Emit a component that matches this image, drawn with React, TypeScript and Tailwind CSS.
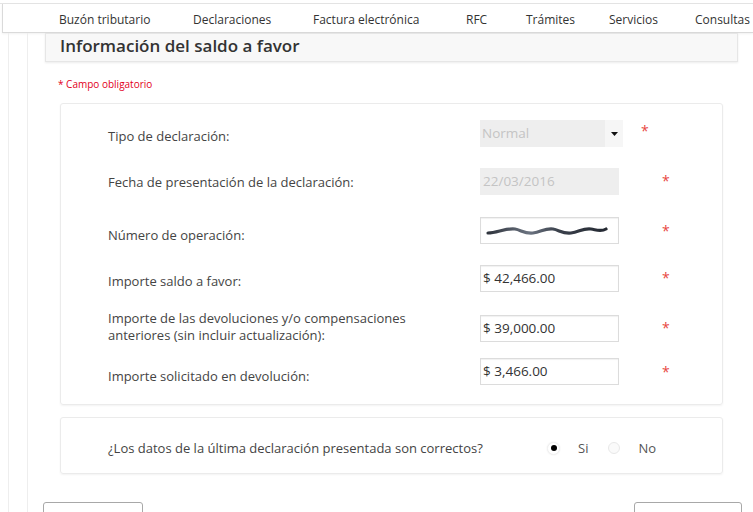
import React from 'react';

const navItems: { label: string; w: string }[] = [
  { label: 'Buzón tributario', w: 'w-[134px]' },
  { label: 'Declaraciones', w: 'w-[120px]' },
  { label: 'Factura electrónica', w: 'w-[153px]' },
  { label: 'RFC', w: 'w-[60px]' },
  { label: 'Trámites', w: 'w-[83px]' },
  { label: 'Servicios', w: 'w-[86px]' },
  { label: 'Consultas', w: 'w-[80px]' },
];

const Star: React.FC<{ className?: string }> = ({ className = '' }) => (
  <span className={`text-[#e8473f] text-[14px] leading-none ${className}`}>*</span>
);

// borrosidad del número de operación (dato oculto en la captura)
const Redacted: React.FC = () => (
  <svg width="126" height="14" viewBox="0 0 126 14" className="block">
    <defs>
      <filter id="blr" x="-10%" y="-50%" width="120%" height="200%">
        <feGaussianBlur stdDeviation="0.6" />
      </filter>
      <linearGradient id="grd" x1="0" x2="1" y1="0" y2="0">
        <stop offset="0" stopColor="#2f343d" />
        <stop offset="0.35" stopColor="#6b7380" />
        <stop offset="0.6" stopColor="#3a404b" />
        <stop offset="1" stopColor="#252a33" />
      </linearGradient>
    </defs>
    <g filter="url(#blr)" fill="none" stroke="url(#grd)" strokeLinecap="round">
      <path d="M3 4 L3 10" strokeWidth="2" />
      <path d="M5 9 C 14 9, 22 4, 32 5 C 38 6, 42 10, 50 9 C 58 8, 62 4, 70 5 C 76 6, 80 10, 88 9 C 96 8, 100 4, 108 5 C 114 6, 118 8, 123 5" strokeWidth="3.2" />
    </g>
  </svg>
);

const Input: React.FC<{ value?: string; disabled?: boolean; children?: React.ReactNode }> = ({ value, disabled, children }) => (
  <div
    className={`w-[139px] h-[27px] flex items-center pl-[2px] border ${
      disabled ? 'bg-[#eeeeee] border-[#eeeeee] text-[#c4c4c4]' : 'bg-white border-[#dcdcdc] text-[#333] shadow-[inset_0_1px_1px_rgba(0,0,0,0.06)]'
    } text-[13.5px]`}
  >
    {children ?? value}
  </div>
);

const App: React.FC = () => {
  return (
    <div className="w-[753px] h-[512px] overflow-hidden bg-white" style={{ fontFamily: '"Open Sans", "DejaVu Sans", sans-serif' }}>
      {/* top nav */}
      <div className="h-[4px] border-b border-[#e4e4e4]" />
      <div className="ml-[2px] h-[29px] border-l border-b border-[#dadada] flex items-center pl-[56px] pt-[3px] shadow-[0_1px_2px_rgba(0,0,0,0.06)] text-[12px] text-[#333]">
        {navItems.map(n => (
          <div key={n.label} className={`${n.w} shrink-0 whitespace-nowrap`}>{n.label}</div>
        ))}
      </div>

      {/* body with side rails */}
      <div className="ml-2 border-l border-[#eeeeee] pl-[18px] h-[480px]">
        <div className="border-l border-[#eeeeee] pl-[17px] h-full">
          <div className="w-[693px] h-[29px] bg-[#f8f8f8] border border-[#e6e6e6] shadow-[0_1px_2px_rgba(0,0,0,0.08)] pl-[14px] flex items-center">
            <h2 className="text-[17px] font-semibold text-[#333] leading-none -mt-[4px]">Información del saldo a favor</h2>
          </div>

          <p className="mt-[15px] ml-[13px] text-[10px] text-[#e2001a] leading-[14px]">* Campo obligatorio</p>

          {/* datos */}
          <div className="mt-[12px] ml-[15px] w-[663px] border border-[#ebebeb] rounded-[3px] shadow-[0_1px_2px_rgba(0,0,0,0.05)] pl-[47px] pt-[16px] pb-[19px] text-[13px] text-[#444]">
            <div className="flex items-center h-[27px]">
              <div className="w-[372px] mt-[7px]">Tipo de declaración:</div>
              <div className="w-[143px] h-[27px] bg-[#eeeeee] flex items-center text-[13.5px] text-[#c4c4c4]">
                <span className="pl-[2px] flex-1">Normal</span>
                <span className="w-[18px] h-full bg-[#f6f6f6] flex items-center justify-center">
                  <svg width="7" height="4" viewBox="0 0 7 4"><path d="M0 0 L7 0 L3.5 4 Z" fill="#111" /></svg>
                </span>
              </div>
              <Star className="ml-[18px] -mt-[5px]" />
            </div>

            <div className="flex items-center h-[27px] mt-[21px]">
              <div className="w-[372px] mt-[2px]">Fecha de presentación de la declaración:</div>
              <Input disabled value="22/03/2016" />
              <Star className="ml-[43px] -mt-[2px]" />
            </div>

            <div className="flex items-center h-[27px] mt-[22px]">
              <div className="w-[372px] mt-[10px]">Número de operación:</div>
              <Input>
                <Redacted />
              </Input>
              <Star className="ml-[43px]" />
            </div>

            <div className="flex items-center h-[28px] mt-[20px]">
              <div className="w-[372px] mt-[8px]">Importe saldo a favor:</div>
              <Input value="$ 42,466.00" />
              <Star className="ml-[43px]" />
            </div>

            <div className="flex items-center h-[28px] mt-[22px]">
              <div className="w-[372px] leading-[17px] -mt-[3px]">
                Importe de las devoluciones y/o compensaciones
                <br />
                anteriores (sin incluir actualización):
              </div>
              <Input value="$ 39,000.00" />
              <Star className="ml-[43px]" />
            </div>

            <div className="flex items-center h-[27px] mt-[16px]">
              <div className="w-[372px] mt-[11px]">Importe solicitado en devolución:</div>
              <Input value="$ 3,466.00" />
              <Star className="ml-[43px]" />
            </div>
          </div>

          {/* confirmación */}
          <div className="mt-[12px] ml-[15px] w-[663px] h-[57px] border border-[#ebebeb] rounded-[3px] shadow-[0_1px_2px_rgba(0,0,0,0.05)] pl-[47px] pt-[5px] flex items-center text-[13px] text-[#444]">
            <div className="w-[439px] mt-[2px]">¿Los datos de la última declaración presentada son correctos?</div>
            <span className="w-[13px] h-[13px] rounded-full border border-[#f0f0f0] bg-white shadow-[0_0_2px_rgba(0,0,0,0.08)] flex items-center justify-center">
              <span className="w-[6px] h-[6px] rounded-full bg-black" />
            </span>
            <span className="ml-[18px] mt-[2px] text-[#555]">Si</span>
            <span className="ml-[20px] w-[12px] h-[12px] rounded-full border border-[#e8e8e8] bg-[#fafafa]" />
            <span className="ml-[18px] mt-[2px] text-[#555]">No</span>
          </div>

          <div className="mt-[28px] -ml-[2px] w-[699px] flex justify-between">
            <div className="w-[100px] h-[30px] border border-[#a8a8a8] rounded-[3px] bg-white" />
            <div className="w-[108px] h-[30px] border border-[#a8a8a8] rounded-[3px] bg-white" />
          </div>
        </div>
      </div>
    </div>
  );
};

export default App;
